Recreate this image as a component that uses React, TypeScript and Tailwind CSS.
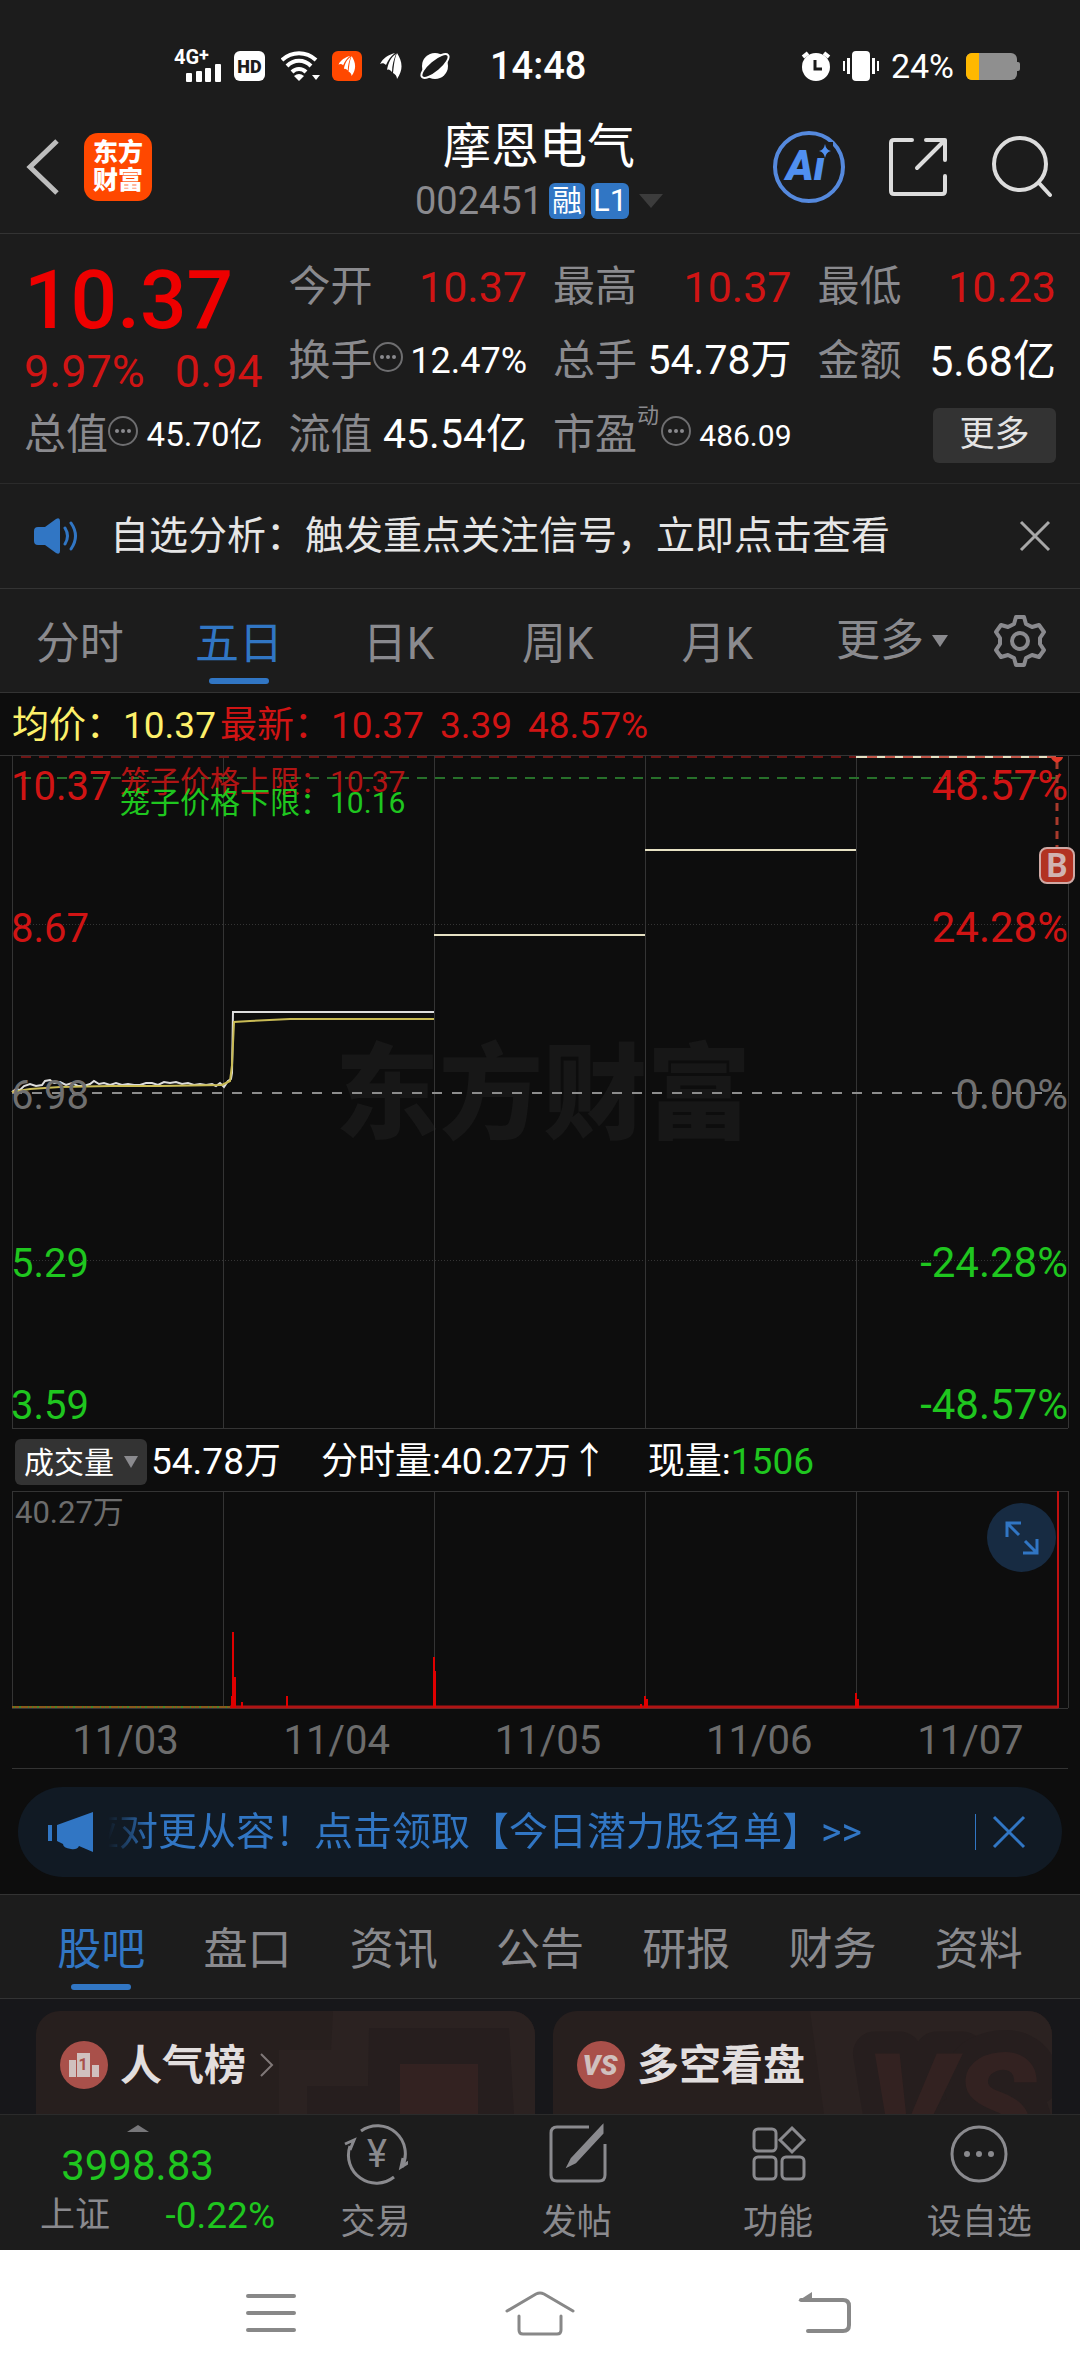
import React, { useState } from "react";

type Stat = {
  label: string;
  value: string;
  valueClass: string;
  info?: boolean;
  sup?: string;
};

const UP = "text-[#d01414]";

const stats: Stat[] = [
  { label: "今开", value: "10.37", valueClass: "text-[43px] text-[#d01414]" },
  { label: "最高", value: "10.37", valueClass: "text-[43px] text-[#d01414]" },
  { label: "最低", value: "10.23", valueClass: "text-[43px] text-[#d01414]" },
  { label: "换手", value: "12.47%", valueClass: "text-[36px] text-white", info: true },
  { label: "总手", value: "54.78万", valueClass: "text-[41px] text-white" },
  { label: "金额", value: "5.68亿", valueClass: "text-[43px] text-white" },
  { label: "总值", value: "45.70亿", valueClass: "text-[33px] text-white", info: true },
  { label: "流值", value: "45.54亿", valueClass: "text-[41px] text-white" },
  { label: "市盈", value: "486.09", valueClass: "text-[30px] text-white", info: true, sup: "动" },
];

const periods = ["分时", "五日", "日K", "周K", "月K"];
const sections = ["股吧", "盘口", "资讯", "公告", "研报", "财务", "资料"];
const dates = ["11/03", "11/04", "11/05", "11/06", "11/07"];

// Left edge of every trading day plus the right border
const dayX = [12, 223, 434, 645, 856, 1068];

const priceDay1 =
  "12,337 16,334 20,335 24,331 30,329 36,331 42,330 45,326 50,325 54,328 60,327 66,330 72,328 78,331 84,331 90,329 94,326 99,329 104,328 110,330 116,328 122,330 128,329 134,330 140,330 146,328 152,328 158,330 164,327 170,328 176,327 182,329 188,328 194,330 200,329 206,330 212,329 216,331 220,328 224,332 228,326 231,324 232,318 233,257 434,257";
const avgDay1 = "12,337 30,334 60,332 110,331 160,331 222,330 230,326 232,310 234,267 250,266 290,264 434,264";

// [x, top] of each volume bar
const volumeBars = [
  [232, 205],
  [233, 141],
  [235, 186],
  [242, 211],
  [287, 205],
  [434, 166],
  [435, 180],
  [641, 213],
  [645, 205],
  [647, 208],
  [856, 202],
  [858, 208],
];

const yLabels = [
  { y: 45, price: "10.37", pct: "48.57%", fill: "#d01414" },
  { y: 187, price: "8.67", pct: "24.28%", fill: "#d01414" },
  { y: 354, price: "6.98", pct: "0.00%", fill: "#707070" },
  { y: 522, price: "5.29", pct: "-24.28%", fill: "#1fc61f" },
  { y: 664, price: "3.59", pct: "-48.57%", fill: "#1fc61f" },
];

const Feather: React.FC<{ className: string }> = ({ className }) => (
  <svg viewBox="0 0 22 26" className={className} fill="currentColor">
    <path d="M0 11C3 5 8 2 15 0 11 3 8 7 6 12 4 10 2 10 0 11z" />
    <path d="M7 17C8 10 11 4 16 1c-2 5-4 11-4 18-2-2-3-3-5-2z" />
    <path d="M13 20c1-7 1-13 4-20 5 8 7 16 0 26 0-3-2-5-4-6z" />
  </svg>
);

const StatusBar: React.FC = () => (
  <div className="flex h-[100px] items-center pt-8 pr-[60px] pl-[174px] text-white">
    <div className="flex items-center gap-3">
      <svg viewBox="0 0 48 68" className="h-[68px] w-12" fill="#fff">
        <text x="0" y="32" fontSize="20" fontWeight="700">4G</text>
        <text x="25" y="29" fontSize="18" fontWeight="700">+</text>
        <rect x="12" y="41" width="6" height="9" rx="1" />
        <rect x="22" y="39" width="6" height="11" rx="1" />
        <rect x="31" y="36" width="6" height="14" rx="1" />
        <rect x="41" y="32" width="6" height="18" rx="1" />
      </svg>
      <span className="flex h-[30px] w-[31px] items-center justify-center rounded-md bg-white text-[18px] font-black text-[#1c1c1c]">HD</span>
      <svg viewBox="0 0 39 30" className="ml-1 h-[30px] w-[39px]" fill="none" stroke="#fff" strokeWidth="4">
        <path d="M1 9C11 0 25 0 35 9" />
        <path d="M6 15C13 8 23 8 30 15" />
        <path d="M11 21C15 17 21 17 25 21" />
        <path d="M13 25q5-4 10 0l-5 5z" fill="#fff" stroke="none" />
        <path d="M31 24h8l-4 5z" fill="#fff" stroke="none" />
      </svg>
      <span className="flex h-[30px] w-[30px] items-center justify-center rounded-md bg-[#ff4800]">
        <Feather className="h-5 w-[18px]" />
      </span>
      <Feather className="ml-1.5 h-[26px] w-[22px]" />
      <svg viewBox="0 0 30 28" className="ml-1.5 h-7 w-[30px]">
        <circle cx="15" cy="14" r="13" fill="#fff" />
        <ellipse cx="15" cy="14" rx="17" ry="6" transform="rotate(-40 15 14)" fill="#1c1c1c" stroke="#fff" strokeWidth="2" />
      </svg>
    </div>
    <span className="ml-10 text-[38px] leading-[44px] font-medium">14:48</span>
    <div className="ml-auto flex items-center gap-3">
      <svg viewBox="0 0 30 30" className="h-[30px] w-[30px]">
        <circle cx="15" cy="16" r="14" fill="#fff" />
        <path d="M2 6l5-4M28 6l-5-4" stroke="#fff" strokeWidth="4" />
        <path d="M14 9v9h7" stroke="#1c1c1c" strokeWidth="3" fill="none" />
      </svg>
      <svg viewBox="0 0 36 30" className="h-[30px] w-9" fill="#fff">
        <rect x="9" y="0" width="18" height="30" rx="4" />
        <rect x="0" y="10" width="2" height="10" />
        <rect x="4" y="7" width="3" height="16" />
        <rect x="29" y="7" width="3" height="16" />
        <rect x="34" y="10" width="2" height="10" />
      </svg>
      <span className="text-[34px] leading-10">24%</span>
      <svg viewBox="0 0 54 27" className="h-[27px] w-[54px]">
        <rect width="51" height="27" rx="6" fill="#8f8f8f" />
        <rect x="48" y="9" width="6" height="9" rx="2" fill="#8f8f8f" />
        <path d="M13 0H6a6 6 0 0 0-6 6v15a6 6 0 0 0 6 6h7z" fill="#ffb800" />
      </svg>
    </div>
  </div>
);

const Header: React.FC = () => (
  <header className="grid h-[134px] grid-cols-[1fr_auto_1fr] items-center border-b border-[#333] pr-7 pl-[26px]">
    <div className="flex items-center gap-6">
      <button aria-label="返回">
        <svg viewBox="0 0 34 56" className="h-14 w-[34px]" fill="none" stroke="#bdbdbd" strokeWidth="5">
          <path d="M31 2L4 28l27 26" />
        </svg>
      </button>
      <a href="#home" className="flex h-[68px] w-[68px] flex-col items-center justify-center rounded-[14px] bg-[#ff4800] text-[25px] leading-[28px] font-black text-white">
        <span>东方</span>
        <span>财富</span>
      </a>
    </div>
    <div className="flex flex-col items-center gap-1 pt-1">
      <h1 className="text-[48px] leading-[60px] text-white">摩恩电气</h1>
      <button className="flex items-center gap-1.5 text-[38px] leading-10 text-[#8a8a8e]">
        002451
        <span className="flex h-9 w-9 items-center justify-center rounded-md bg-[#3176c4] text-[30px] text-white">融</span>
        <span className="flex h-9 w-[38px] items-center justify-center rounded-md bg-[#3176c4] text-[31px] text-white">L1</span>
        <svg viewBox="0 0 24 14" className="ml-1 h-3.5 w-6" fill="#3c3c3c">
          <path d="M0 0h24L12 14z" />
        </svg>
      </button>
    </div>
    <div className="flex items-center justify-end gap-[42px]">
      <button aria-label="AI 助手">
        <svg viewBox="0 0 74 74" className="h-[74px] w-[74px]">
          <circle cx="37" cy="37" r="34" fill="none" stroke="#5589dd" strokeWidth="4" />
          <text x="14" y="50" fontSize="42" fontWeight="900" fontStyle="italic" fill="#5090f0">Ai</text>
          <rect x="43" y="12" width="18" height="16" fill="#1c1c1c" />
          <path d="M53 14q1 6 6 7-5 1-6 7-1-6-6-7 5-1 6-7z" fill="#5090f0" />
        </svg>
      </button>
      <button aria-label="分享">
        <svg viewBox="0 0 60 60" className="h-[60px] w-[60px]" fill="none" stroke="#dcdcdc" strokeWidth="4" strokeLinecap="round" strokeLinejoin="round">
          <path d="M24 3H6q-3 0-3 3v48q0 3 3 3h48q3 0 3-3V39" />
          <path d="M38 3h19v20M56 4L29 31" />
        </svg>
      </button>
      <button aria-label="搜索">
        <svg viewBox="0 0 62 62" className="h-[62px] w-[62px]" fill="none" stroke="#dcdcdc" strokeWidth="4" strokeLinecap="round">
          <circle cx="30" cy="28" r="26" />
          <path d="M49 47l11 12" />
        </svg>
      </button>
    </div>
  </header>
);

const InfoDots: React.FC = () => (
  <svg viewBox="0 0 30 30" className="-mt-2 h-[30px] w-[30px] shrink-0">
    <circle cx="15" cy="15" r="14" fill="none" stroke="#6e6e70" strokeWidth="2" />
    <g fill="#8a8a8e">
      <circle cx="9" cy="15" r="2" />
      <circle cx="15" cy="15" r="2" />
      <circle cx="21" cy="15" r="2" />
    </g>
  </svg>
);

const StatCell: React.FC<{ stat: Stat }> = ({ stat }) => (
  <div className="flex h-[74px] items-center justify-between whitespace-nowrap">
    <dt className="flex items-center text-[42px] leading-[60px] text-[#8a8a8e]">
      {stat.label}
      {stat.sup && <span className="mr-0.5 self-start text-[22px] leading-[22px]">{stat.sup}</span>}
      {stat.info && <InfoDots />}
    </dt>
    <dd className={stat.valueClass}>{stat.value}</dd>
  </div>
);

const Quote: React.FC = () => (
  <dl className="grid grid-cols-4 gap-x-[26px] border-b border-[#2b2b2b] pt-4 pr-6 pb-[11px] pl-6">
    <div className="row-span-2 flex flex-col">
      <dd className="pt-1 text-[82px] leading-[92px] font-medium text-[#ee0000]">10.37</dd>
      <dd className={`flex justify-between text-[45px] leading-[52px] ${UP}`}>
        <span>9.97%</span>
        <span>0.94</span>
      </dd>
    </div>
    {stats.map((stat) => (
      <StatCell key={stat.label} stat={stat} />
    ))}
    <div className="flex h-[74px] items-center justify-end">
      <button className="h-[55px] w-[123px] rounded-md bg-[#333] text-[35px] text-[#e4e4e4]">更多</button>
    </div>
  </dl>
);

const Notice: React.FC = () => (
  <div className="flex h-[105px] items-center border-b border-[#333] pr-[29px] pl-[34px]">
    <svg viewBox="0 0 44 36" className="h-9 w-11" fill="#3176c4">
      <path d="M4 9h7L22 1q4-2 4 2v30q0 4-4 2L11 27H4q-4 0-4-4V13q0-4 4-4z" />
      <path d="M31 10q5 8 0 16M37 5q9 13 0 26" fill="none" stroke="#3176c4" strokeWidth="3" strokeLinecap="round" />
    </svg>
    <p className="ml-8 text-[39px] leading-[56px] text-[#e6e6e6]">自选分析：触发重点关注信号，立即点击查看</p>
    <button aria-label="关闭提示" className="ml-auto">
      <svg viewBox="0 0 32 32" className="h-8 w-8" stroke="#a8a8a8" strokeWidth="3">
        <path d="M2 2l28 28M30 2L2 30" />
      </svg>
    </button>
  </div>
);

const PeriodTabs: React.FC = () => {
  const [active, setActive] = useState("五日");

  return (
    <nav className="flex h-[104px] border-b border-[#333] pr-[27px] text-[44px] text-[#8a8a8e]">
      {periods.map((period) => (
        <button
          key={period}
          onClick={() => setActive(period)}
          className={`flex flex-1 flex-col items-center justify-end pb-2 leading-[60px] ${period === active ? "text-[#3176c4]" : ""}`}
        >
          {period}
          <span className={`mt-1 h-1.5 w-[60px] rounded-full ${period === active ? "bg-[#3176c4]" : ""}`} />
        </button>
      ))}
      <button className="flex w-[190px] items-center justify-center gap-2">
        更多
        <svg viewBox="0 0 16 12" className="h-3 w-4" fill="#8a8a8e">
          <path d="M0 0h16L8 12z" />
        </svg>
      </button>
      <button aria-label="设置" className="flex w-[66px] items-center justify-center">
        <svg viewBox="0 0 52 52" className="h-[52px] w-[52px]" fill="none" stroke="#8a8a8e" strokeWidth="4" strokeLinejoin="round">
          <path d="M22 2h8l2 7 6 3 7-2 5 7-4 6v6l4 6-5 7-7-2-6 3-2 7h-8l-2-7-6-3-7 2-5-7 4-6v-6l-4-6 5-7 7 2 6-3z" />
          <circle cx="26" cy="26" r="8" />
        </svg>
      </button>
    </nav>
  );
};

const PriceChart: React.FC = () => (
  <svg viewBox="0 0 1080 674" className="block h-auto w-full" fill="none">
    <text x="335" y="376" fontSize="104" fontWeight="900" fill="#171717">东方财富</text>
    <g stroke="#343434">
      <path d="M0 .5H1080M12 673.5H1068" />
      {dayX.map((x) => (
        <path key={x} d={`M${x + 0.5} 1V673`} />
      ))}
      <path d="M12 169.5H1068M12 505.5H1068" strokeDasharray="1 2" />
    </g>
    <path d="M12 338H1066" stroke="#8c8c8c" strokeWidth="2" strokeDasharray="10 10" />
    <path d="M21 23H1058" stroke="#27702a" strokeWidth="2" strokeDasharray="10 8" />
    <path d="M21 2H856" stroke="#6e1515" strokeWidth="2" strokeDasharray="10 8" />

    <polyline points={priceDay1} stroke="#dedede" strokeWidth="2" />
    <polyline points={avgDay1} stroke="#c9bb55" strokeWidth="2" />
    <path d="M434 180H645M645 95H856M856 2H1056" stroke="#e6e1c3" strokeWidth="2" />
    <path d="M867 2H1056" stroke="#c05548" strokeWidth="2" strokeDasharray="10 8" />

    {yLabels.map((label) => (
      <g key={label.price} fill={label.fill}>
        <text x="11" y={label.y} fontSize="40">{label.price}</text>
        <text x="1068" y={label.y} fontSize="42" textAnchor="end">{label.pct}</text>
      </g>
    ))}
    <text x="120" y="37" fontSize="30" fill="#b01414">笼子价格上限：10.37</text>
    <text x="120" y="58" fontSize="30" fill="#1fc61f">笼子价格下限：10.16</text>

    {/* Buy marker */}
    <path d="M1057 6V92" stroke="#a83a2c" strokeWidth="3" strokeDasharray="8 6" />
    <path d="M1051 2h12q0 3-6 6-6-3-6-6z" fill="#e03828" />
    <rect x="1040" y="93" width="34" height="35" rx="7" fill="#b23222" stroke="#cfa9a5" strokeWidth="2" />
    <text x="1057" y="122" fontSize="33" fontWeight="700" textAnchor="middle" fill="#d0b4b2">B</text>
  </svg>
);

const VolumeChart: React.FC = () => (
  <div className="relative">
    <svg viewBox="0 0 1080 218" className="block h-auto w-full" fill="none">
      <g stroke="#343434">
        <path d="M12 .5H1068M12 217.5H1068" />
        {dayX.map((x) => (
          <path key={x} d={`M${x + 0.5} 0V217`} />
        ))}
      </g>
      <path d="M12 216H230" stroke="#8a5a1c" strokeWidth="2" />
      <path d="M14 216H230" stroke="#3f8a2a" strokeWidth="2" strokeDasharray="1 4 2 7 1 3" />
      <path d="M230 216H1058" stroke="#b01414" strokeWidth="3" />
      {volumeBars.map(([x, top]) => (
        <path key={x} d={`M${x} ${top}V217`} stroke="#e00000" strokeWidth="2" />
      ))}
      <path d="M1058 0V217" stroke="#c01010" strokeWidth="2" />
      <text x="15" y="32" fontSize="31" fill="#6c6c6c">40.27万</text>
    </svg>
    <button aria-label="全屏" className="absolute top-3 right-6 flex h-[69px] w-[69px] items-center justify-center rounded-full bg-[#172b42]">
      <svg viewBox="0 0 34 34" className="h-[34px] w-[34px]" fill="none" stroke="#3176c4" strokeWidth="3">
        <path d="M2 16V2h14M2 2l12 12M32 18v14H18M32 32L20 20" />
      </svg>
    </button>
  </div>
);

const Charts: React.FC = () => (
  <section className="bg-[#0d0d0d]">
    <div className="flex h-[62px] items-center gap-4 pt-1 pl-3 text-[37px] whitespace-pre text-[#d01414]">
      <span>
        <span className="mr-1 text-[#fdf06a]">均价：10.37</span>
        最新：10.37
      </span>
      <span>3.39</span>
      <span>48.57%</span>
    </div>
    <PriceChart />
    <div className="flex h-[62px] items-center pt-1 pl-[15px] text-[37px] text-white">
      <button className="mr-1 flex h-[46px] w-[132px] items-center justify-center gap-2.5 rounded-md bg-[#333] text-[30px]">
        成交量
        <svg viewBox="0 0 14 12" className="h-3 w-3.5" fill="#8a8a8e">
          <path d="M0 0h14L7 12z" />
        </svg>
      </button>
      <span className="mr-10">54.78万</span>
      <span className="mr-10">分时量:40.27万↑</span>
      <span>
        现量:<span className="text-[#1fc61f]">1506</span>
      </span>
    </div>
    <VolumeChart />
    <div className="mx-3 grid h-[60px] grid-cols-5 items-center border-b border-[#333] pt-0.5 text-center text-[40px] text-[#6c6c6c]">
      {dates.map((date) => (
        <span key={date} className="pl-4">{date}</span>
      ))}
    </div>
    <div className="px-[18px] pt-[18px] pb-[17px]">
      <div className="flex h-[90px] items-center rounded-full bg-[#111a24] pr-9 pl-[30px] text-[#3176c4]">
        <svg viewBox="0 0 46 40" className="h-10 w-[46px]" fill="#3176c4">
          <path d="M0 13h4v16H0zM9 13L45 0v40l-14-6q-2 4-8 3-8-1-8-5l-6-3z" />
        </svg>
        <div className="ml-3.5 flex-1 overflow-hidden mask-[linear-gradient(to_right,transparent,black_44px)]">
          <a href="#promo" className="-ml-7 block text-[39px] leading-[56px] whitespace-nowrap">
            应对更从容！点击领取【今日潜力股名单】&gt;&gt;
          </a>
        </div>
        <span className="mr-4 h-9 w-px bg-[#3176c4]" />
        <button aria-label="关闭广告">
          <svg viewBox="0 0 34 34" className="h-[34px] w-[34px]" stroke="#3176c4" strokeWidth="3">
            <path d="M2 2l30 30M32 2L2 32" />
          </svg>
        </button>
      </div>
    </div>
  </section>
);

const SectionTabs: React.FC = () => {
  const [active, setActive] = useState("股吧");

  return (
    <nav className="grid h-[105px] grid-cols-7 border-y border-[#333] px-7 text-[44px] text-[#8a8a8e]">
      {sections.map((section) => (
        <button
          key={section}
          onClick={() => setActive(section)}
          className={`flex flex-col items-center justify-end pb-2 leading-[60px] ${section === active ? "text-[#3176c4]" : ""}`}
        >
          {section}
          <span className={`mt-1 h-1.5 w-[60px] rounded-full ${section === active ? "bg-[#3176c4]" : ""}`} />
        </button>
      ))}
    </nav>
  );
};

const Cards: React.FC = () => (
  <div className="grid h-[115px] grid-cols-2 gap-[18px] overflow-hidden bg-[#17171a] pt-3 pr-7 pl-9 text-[42px] font-bold text-[#e2dede]">
    <a href="#rank" className="relative flex h-[108px] items-center overflow-hidden rounded-t-3xl bg-[#271f1e] pl-6">
      <svg viewBox="0 0 256 104" className="absolute top-0 right-0 h-[104px] w-64">
        <path d="M0 39h52L54 0h202v104H0z" fill="#2b2221" />
        <path d="M28 104V75h61l1-58h140l5 87z" fill="#261e1e" />
        <path d="M121 53h78v51h-78z" fill="#332221" />
      </svg>
      <svg viewBox="0 0 48 48" className="relative h-12 w-12">
        <circle cx="24" cy="24" r="24" fill="#a9504a" />
        <path d="M9 19h7v17H9zM17 12h13v24H17zM32 24h7v12h-7z" fill="#d0c0be" />
        <text x="23" y="29" fontSize="16" fontWeight="700" textAnchor="middle" fill="#a9504a">1</text>
      </svg>
      <span className="relative ml-3">人气榜</span>
      <svg viewBox="0 0 14 24" className="relative ml-3.5 h-6 w-3.5" fill="none" stroke="#807878" strokeWidth="2">
        <path d="M1 1l11 11L1 23" />
      </svg>
    </a>
    <a href="#vs" className="relative flex h-[108px] items-center overflow-hidden rounded-t-3xl bg-[#271f1e] pl-6">
      <svg viewBox="0 0 242 104" className="absolute top-0 right-0 h-[104px] w-[242px]">
        <path d="M0 0h242v104H14z" fill="#2b2221" />
        <text x="56" y="140" fontSize="136" fontWeight="900" fontStyle="italic" fill="#332221" stroke="#261e1e" strokeWidth="44" strokeLinejoin="round" paintOrder="stroke">VS</text>
      </svg>
      <svg viewBox="0 0 48 48" className="relative h-12 w-12">
        <circle cx="24" cy="24" r="24" fill="#a9504a" />
        <text x="23" y="34" fontSize="28" fontWeight="900" fontStyle="italic" textAnchor="middle" fill="#d0c0be">VS</text>
      </svg>
      <span className="relative ml-3">多空看盘</span>
    </a>
  </div>
);

const ActionBar: React.FC = () => {
  const actions = [
    {
      label: "交易",
      icon: (
        <>
          <path d="M17 9A28 28 0 0 1 58 45M6 24A28 28 0 0 0 50 55" />
          <path d="M1 22l9-4-4 10M65 40l-8 5 2-9" />
          <text x="33" y="45" fontSize="38" textAnchor="middle" fill="#8a8a8e" stroke="none">¥</text>
        </>
      ),
    },
    {
      label: "发帖",
      icon: (
        <>
          <path d="M44 5H12q-6 0-6 6v42q0 6 6 6h42q6 0 6-6V22" />
          <path d="M57 5L27 37l-3 6 6-3 27-29z" fill="#8a8a8e" />
        </>
      ),
    },
    {
      label: "功能",
      icon: (
        <>
          <rect x="8" y="7" width="22" height="22" rx="4" />
          <rect x="8" y="35" width="22" height="22" rx="4" />
          <rect x="36" y="35" width="22" height="22" rx="4" />
          <path d="M46 6l12 12-12 12-12-12z" />
        </>
      ),
    },
    {
      label: "设自选",
      icon: (
        <>
          <circle cx="32" cy="32" r="27" />
          <g fill="#8a8a8e" stroke="none">
            <circle cx="20" cy="32" r="3" />
            <circle cx="32" cy="32" r="3" />
            <circle cx="44" cy="32" r="3" />
          </g>
        </>
      ),
    },
  ];

  return (
    <div className="flex h-[136px] border-t border-[#2b2b2b] text-[35px] text-[#8a8a8e]">
      <button className="flex w-[275px] flex-col items-center pt-2.5">
        <svg viewBox="0 0 22 7" className="h-[7px] w-[22px]" fill="#77777a">
          <path d="M0 7h22L11 0z" />
        </svg>
        <span className="mt-2 text-[42px] leading-[52px] text-[#1fc61f]">3998.83</span>
        <span className="flex w-full justify-between pl-10 leading-[48px]">
          上证
          <span className="text-[37px] text-[#1fc61f]">-0.22%</span>
        </span>
      </button>
      {actions.map((action) => (
        <button key={action.label} className="flex flex-1 flex-col items-center pt-[7px]">
          <svg viewBox="0 0 64 64" className="h-16 w-16" fill="none" stroke="#8a8a8e" strokeWidth="3">
            {action.icon}
          </svg>
          <span className="mt-3.5 leading-[46px]">{action.label}</span>
        </button>
      ))}
    </div>
  );
};

const SystemNav: React.FC = () => (
  <div className="grid h-[126px] grid-cols-3 items-center justify-items-center bg-white px-[136px]">
    <button aria-label="最近任务">
      <svg viewBox="0 0 50 44" className="h-11 w-[50px]" stroke="#888" strokeWidth="4" strokeLinecap="round">
        <path d="M2 5h46M2 22h46M2 39h46" />
      </svg>
    </button>
    <button aria-label="主屏幕">
      <svg viewBox="0 0 70 46" className="h-[46px] w-[70px]" fill="none" stroke="#888" strokeWidth="3" strokeLinecap="round" strokeLinejoin="round">
        <path d="M2 21L31 4q4-2 8 0l29 17" />
        <path d="M14 26v14q0 4 4 4h34q4 0 4-4V26" />
      </svg>
    </button>
    <button aria-label="后退">
      <svg viewBox="0 0 84 46" className="h-[46px] w-[84px]" fill="none" stroke="#888" strokeWidth="4" strokeLinecap="round">
        <path d="M34 10h42q6 0 6 6v19q0 6-6 6H41" />
        <path d="M31 11L45 2v9z" fill="#888" stroke="none" />
      </svg>
    </button>
  </div>
);

const App: React.FC = () => {
  return (
    <main className="w-full bg-[#1c1c1c] font-[Roboto,'Noto_Sans_CJK_SC',sans-serif]">
      <StatusBar />
      <Header />
      <Quote />
      <Notice />
      <PeriodTabs />
      <Charts />
      <SectionTabs />
      <Cards />
      <ActionBar />
      <SystemNav />
    </main>
  );
};

export default App;
